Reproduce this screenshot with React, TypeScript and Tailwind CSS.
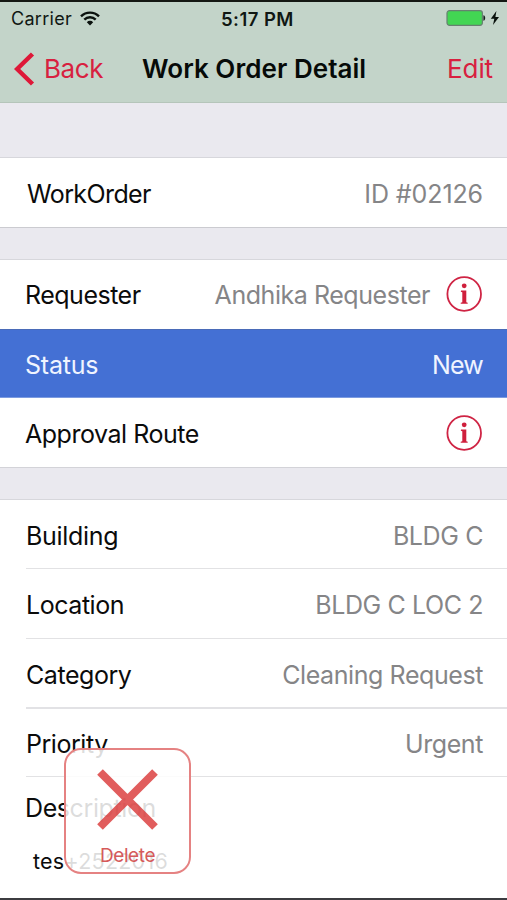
import type { ReactNode } from "react";

function InfoIcon() {
  return (
    <svg className="ml-4 mr-px h-9 w-9 shrink-0" viewBox="0 0 36 36" fill="none">
      <circle cx="18.2" cy="18" r="16.8" stroke="#cf2444" strokeWidth="1.8" />
      <circle cx="18.2" cy="9.8" r="2.4" fill="#cf1f3c" />
      <path d="M15.1 14.6h5.2v11.6l1.4.5v1h-7v-1l1.6-.5V16.2l-1.5-.5z" fill="#cf1f3c" />
    </svg>
  );
}

type RowProps = {
  label: string;
  labelClass?: string;
  value?: string;
  valueClass?: string;
  className?: string;
  children?: ReactNode;
};

function Row({ label, labelClass = "", value, valueClass = "", className = "text-[#0b0b0b]", children }: RowProps) {
  return (
    <div className={`flex items-center whitespace-nowrap ${className}`}>
      <span className={`grow ${labelClass}`}>{label}</span>
      {value && <span className={valueClass}>{value}</span>}
      {children}
    </div>
  );
}

function StatusBar() {
  return (
    <div className="flex h-8 items-center pl-[11px] pr-[7px] text-[18px] leading-8 text-[#101713]">
      <div className="flex w-[210px] items-center pt-px">
        <span className="tracking-[0.3px]">Carrier</span>
        <svg className="ml-2 h-[15px] w-5" viewBox="0 0 20 15" fill="none" stroke="#0b120e" strokeWidth="2.4">
          <path d="M1 5.3a12.8 12.8 0 0 1 18 0" />
          <path d="M4.3 8.6a8.1 8.1 0 0 1 11.4 0" />
          <path d="M10 14.4 6.8 11.2a4.5 4.5 0 0 1 6.4 0z" fill="#0b120e" stroke="none" />
        </svg>
      </div>
      <span className="pt-px text-[18.5px] font-semibold tracking-[0.45px]">5:17 PM</span>
      <svg className="ml-auto h-4 w-[54px]" viewBox="0 0 54 16">
        <rect x="1" y=".7" width="35.4" height="14.6" rx="2.5" fill="#42d653" stroke="#668170" strokeWidth="1.2" />
        <path d="M37.4 5.2c2.4.5 2.4 5.1 0 5.6z" fill="#142019" />
        <path d="m50.4 1-5.6 7.8h3.5l-1.3 6.3 6-8.2h-3.6z" fill="#08100b" />
      </svg>
    </div>
  );
}

function NavBar() {
  return (
    <div className="flex h-[69px] items-center whitespace-nowrap px-[14px] text-[26px] text-[#d8203f]">
      <svg className="h-[34px] w-[21px]" viewBox="0 0 21 34" fill="none">
        <path d="M18.5 2 3.1 17l15.4 15" stroke="#de1838" strokeWidth="4.5" />
      </svg>
      <span className="ml-[9px] w-[98px] tracking-[-0.4px]">Back</span>
      <h1 className="text-[26px] font-semibold tracking-[0.05px] text-[#060a08]">Work Order Detail</h1>
      <span className="ml-auto tracking-[-0.1px]">Edit</span>
    </div>
  );
}

export default function App() {
  return (
    <div className="relative flex h-[900px] w-[507px] flex-col overflow-hidden border-b-2 border-t-2 border-b-[#3c3c40] border-t-[#141713] bg-white font-['Inter','Liberation_Sans',sans-serif] text-[25px]">
      <header className="h-[101px] shrink-0 border-b border-[#b5c5ba] bg-[#c3d4c9]">
        <StatusBar />
        <NavBar />
      </header>

      <div className="h-[55px] shrink-0 border-b border-[#d7d7dc] bg-[#eae9ef]" />
      <Row
        className="h-[69px] shrink-0 pl-[27px] pr-6 pt-[5px] text-[#0b0b0b]"
        label="WorkOrder"
        labelClass="tracking-[-0.6px]"
        value="ID #02126"
        valueClass="tracking-[-0.1px] text-[#858587]"
      />

      <div className="h-[33px] shrink-0 border-y border-b-[#d7d7dc] border-t-[#cbcbd0] bg-[#eae9ef]" />
      <Row
        className="h-[69px] shrink-0 pb-px pl-[25px] pr-6 text-[#0b0b0b]"
        label="Requester"
        labelClass="pt-[4px] tracking-[-0.5px]"
        value="Andhika Requester"
        valueClass="pt-[4px] tracking-[-0.45px] text-[#858587]"
      >
        <InfoIcon />
      </Row>
      <Row
        className="h-[69px] shrink-0 border-y border-b-[#7c9be0] border-t-[#4a6bb8] bg-[#4470d4] pl-[25px] pr-6 pt-[5px] text-[#f0f4ff]"
        label="Status"
        labelClass="tracking-[-0.2px]"
        value="New"
        valueClass="tracking-[-0.8px]"
      />
      <Row className="h-[69px] shrink-0 pl-[25px] pr-6 text-[#0b0b0b]" label="Approval Route" labelClass="pt-[5px] tracking-[-0.47px]">
        <InfoIcon />
      </Row>

      <div className="h-[33px] shrink-0 border-y border-b-[#d7d7dc] border-t-[#d3d3d8] bg-[#eae9ef]" />
      <div className="pl-[26px]">
        <Row className="h-[69px] border-b border-[#e2e2e4] pr-6 pt-[5px] text-[#0b0b0b]" label="Building" labelClass="tracking-[-0.3px]" value="BLDG C" valueClass="tracking-[-0.4px] text-[#858587]" />
        <Row className="h-[70px] border-b border-[#e2e2e4] pr-6 pt-[5px] text-[#0b0b0b]" label="Location" labelClass="tracking-[-0.45px]" value="BLDG C LOC 2" valueClass="tracking-[-0.4px] text-[#858587]" />
        <Row className="h-[70px] border-b-2 border-[#e2e2e5] pr-6 pt-[6px] text-[#0b0b0b]" label="Category" labelClass="tracking-[-0.45px]" value="Cleaning Request" valueClass="tracking-[-0.42px] text-[#858587]" />
        <Row className="h-[68px] border-b border-[#e2e2e4] pr-6 pt-[5px] text-[#0b0b0b]" label="Priority" labelClass="tracking-[-0.45px]" value="Urgent" valueClass="tracking-[-0.4px] text-[#858587]" />
      </div>
      <div className="-mt-px whitespace-nowrap pl-[25px] pt-[15px] text-[#0b0b0b]">
        <div className="h-[54px] leading-[34px] tracking-[-0.4px]">Description</div>
        <div className="pl-2 pt-px text-[21.5px] leading-[30px] tracking-[0.25px]">tes+2522016</div>
      </div>

      <button className="absolute left-[64px] top-[746px] flex h-[126px] w-[127px] flex-col items-center rounded-[17px] border-2 border-[#e27474]/90 bg-white/[0.86] pt-[19px] text-[#d65a5a]">
        <svg className="h-[61px] w-[61px]" viewBox="0 0 61 61">
          <path d="M3 3 58 58M58 3 3 58" stroke="#d93434" strokeOpacity=".8" strokeWidth="8" />
        </svg>
        <span className="mt-[14px] text-[19px] leading-6 tracking-[-0.4px]">Delete</span>
      </button>
    </div>
  );
}
